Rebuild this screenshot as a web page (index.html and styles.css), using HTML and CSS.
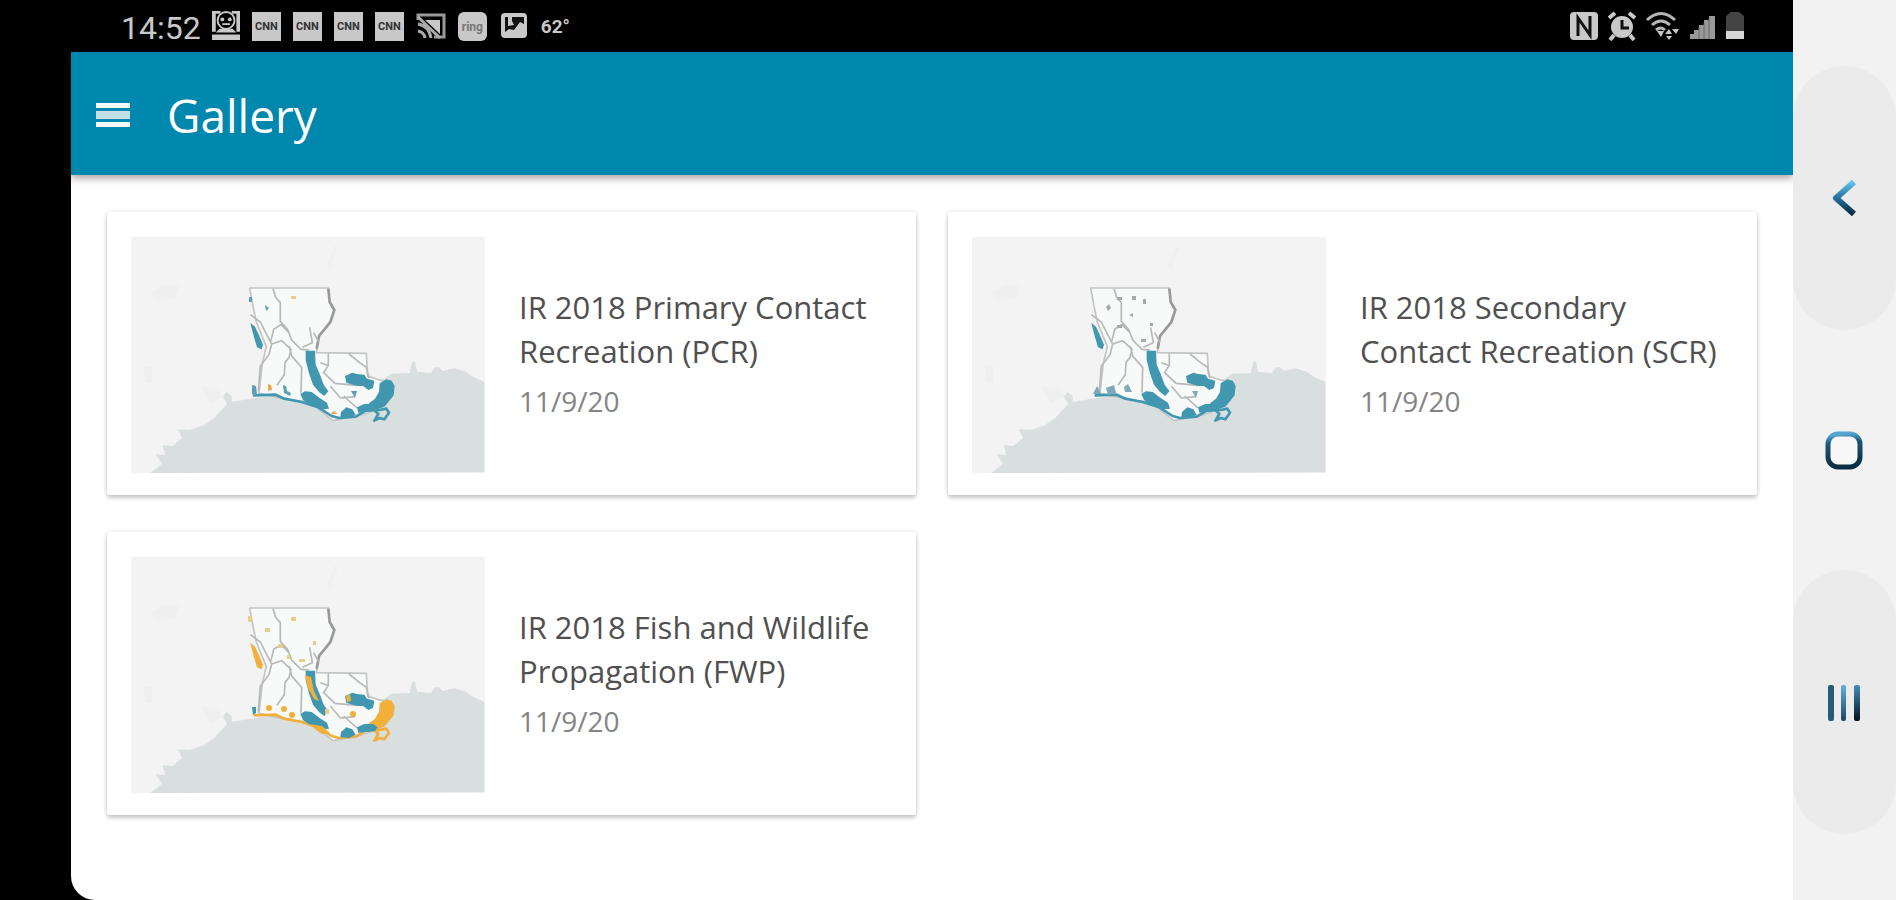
FILE: index.html
```
<!DOCTYPE html>
<html lang="en">
<head>
  <meta charset="UTF-8">
  <meta name="viewport" content="width=device-width, initial-scale=1.0">
  <title>Gallery</title>
  <link rel="stylesheet" href="styles.css">
</head>
<body>
  <!-- shared map shapes -->
  <svg class="defs" aria-hidden="true">
    <defs>
      <symbol id="base" viewBox="92 113 1062 708">
        <rect x="92" y="113" width="1062" height="708" fill="#f3f3f3"/>
        <path fill="#efefef" d="M150 280l40-25 45 5-10 35-50 8zM300 560l50 10 20 20-40 20zM680 200l20-60 12 5-20 60zM130 500h25v50h-20z"/>
        <path fill="#d9dedf" d="M150 821l35-28-20-30 30 5-8-30 30 2 28-24-12-26 35 2 42-14 32-22 38-42-12-22 10-14 16 12v18l58-10 400-60 20-15 56-2 8-34h8l6 30 42 4 10-16 12-2 14 12 34-8 34 10 22 16 34 14v272z"/>
        <path fill="#f8f9f9" stroke="#c4c4c4" stroke-width="5" stroke-linejoin="round" d="M448 266H684l4 42 14 24-12 36-34 42-8 50 150 2 4 68 36 12 38 12-2 36-40 40-60 20-76 14-70-56-60-6-92-20 10-90 12-50-30-74-10-48z"/>
        <path fill="none" stroke="#999" stroke-width="8" d="M684 268l4 40 14 24-12 36-34 42-7 38"/>
        <path fill="none" stroke="#b8b8b8" stroke-width="5" d="M518 268l8 26 14 16v56l22 24 12 32 28 28 24 2M450 346l30 22 16 32 18 34 30-10 28 26-6 24-12 16-2 36-22 32M514 434l-8 32-26 34-6 76M566 440l8 30 30 34-2 76M512 424l8-34 22-14 24 24M628 384l8 46-30 14M640 400l16 30M684 462v36l-14 22 34 32 66 6 36-14M746 464l32 26 20 14 8 32M660 490l22 8M690 560l30 36 44-4M730 590l40 36"/>
      </symbol>
      <symbol id="coast" viewBox="92 113 1062 708">
        <path d="M616 454h28l2 42 12 28 12 32 14 20-12 14-16-12-18-22-12-34-10-40z"/>
        <path d="M734 530l22-10 14 4 22 2 8 12 22 6-4 22-14 6-16-12-14 0-16-4-20-6z"/>
        <path d="M600 584l14-8 20 2 24 18 22 14 6 18-22 2-30-10-26-18zM722 638l16-14 18 6 10 16-20 10-26-2zM770 624l22-10 26 0 14 10-8 12-50 4z"/>
      </symbol>
      <symbol id="delta" viewBox="92 113 1062 708">
        <path d="M838 552l20-12 16 4 9 16-3 28-14 18-14 16-22 8-22-8-2-10 18-14 12-20z"/>
        <path fill="none" stroke-width="8" stroke="currentColor" stroke-linejoin="round" d="M822 632l12 12-12 20 16-8 14 4 14-20-8-12-20 4z"/>
      </symbol>
      <symbol id="shore" viewBox="92 113 1062 708">
        <path d="M450 370l14 12 12 26 12 28-4 14-14-6-10-34z"/>
        <path fill="none" stroke-width="8" stroke="currentColor" stroke-linejoin="round" d="M460 588l66-2 26 12 52 10 50 16 40 26 22 6 50-4 30-18 26-4"/>
      </symbol>
    </defs>
  </svg>

  <div class="screen">
    <div class="statusbar">
      <span class="clock">14:52</span>
      <div class="notifications">
        <svg viewBox="0 0 30 32" class="icon"><path fill="#c8c8c8" d="M0 0h9v3H4v19H0zM21 0h9v22h-4V3h-5zM0 25h30v6H0zM8 19h14l4 4H4z"/><circle cx="15" cy="10" r="9" fill="none" stroke="#c8c8c8" stroke-width="2"/><circle cx="11" cy="9" r="2" fill="#c8c8c8"/><circle cx="19" cy="9" r="2" fill="#c8c8c8"/><path stroke="#c8c8c8" stroke-width="2" d="M11 14h8"/></svg>
        <span class="app">CNN</span>
        <span class="app">CNN</span>
        <span class="app">CNN</span>
        <span class="app">CNN</span>
        <svg viewBox="0 0 30 30" class="icon"><path fill="none" stroke="#999" stroke-width="3" d="M2 9V4h26v22H18"/><path fill="#c8c8c8" d="M9 9h15v14z"/><path fill="none" stroke="#aaa" stroke-width="3" d="M2 13q11 2 13 14M2 20q6 1 7 7M2 6l22 21"/></svg>
        <span class="app app-ring">ring</span>
        <svg viewBox="0 0 30 30" class="icon"><rect x="2" y="2" width="26" height="25" rx="4" fill="#c8c8c8"/><path fill="#111" d="M6 6h3v9l6-1-2-4V6h12v7l-4-2-6 8-5-1-4 3H6z"/></svg>
        <span class="temp">62°</span>
      </div>
      <div class="system">
        <svg viewBox="0 0 30 30" class="icon"><rect x="1" y="1" width="28" height="28" rx="4" fill="#c8c8c8"/><path fill="none" stroke="#111" stroke-width="3" d="M9 25V7l12 17V5"/></svg>
        <svg viewBox="0 0 30 30" class="icon"><circle cx="15" cy="16" r="11" fill="#c8c8c8"/><path stroke="#c8c8c8" stroke-width="4" d="M2 7l6-5M28 7l-6-5M7 24l-4 5M23 24l4 5"/><path fill="none" stroke="#111" stroke-width="3" d="M15 9v8h7"/></svg>
        <svg viewBox="0 0 36 30" class="icon"><g fill="none" stroke="#b5b5b5" stroke-width="3"><path d="M2 9q14-13 28 0M7 14q9-8 18 0M11 19q5-4 9 0"/></g><path fill="#c8c8c8" d="M12 20h7l-3 6zM20 23l4-5 3 5zM27 18h7l-3 5zM21 25h6l-3 4z"/></svg>
        <svg viewBox="0 0 28 30" class="icon"><path fill="#999" d="M1 28v-5h4v-4h5v-5h5V9h5V5h6v23z"/><path stroke="#666" stroke-width="1" d="M10 16v12M15 12v16M20 7v21"/></svg>
        <svg viewBox="0 0 20 30" class="icon"><path fill="#444" d="M1 5l5-4h8l5 4v15H1z"/><path fill="#d6d6d6" d="M1 20h18v8H1z"/></svg>
      </div>
    </div>

    <main class="app-view">
      <header class="toolbar">
        <button class="menu" type="button" aria-label="Menu">
          <span></span><span></span><span></span>
        </button>
        <h1>Gallery</h1>
      </header>

      <section class="cards">
        <a class="card" href="#pcr">
          <svg class="map" viewBox="0 0 354 236">
            <use href="#base"/>
            <g class="blue"><use href="#coast"/><use href="#delta"/><use href="#shore"/></g>
            <g fill="#5d9fb6"><path d="M121 148l4 1 1 9-4 2-1-5zM152 148l3 1 1 5 4 2-1 3-6-3zM134 68l4 3-3 3zM118 60h3v5h-3zM220 154h6l-2 7z"/></g>
            <g fill="#e6a94e"><path d="M137 147l3 1 1 5-4 1zM202 174l5 3h-7z"/></g>
            <path fill="#e9cd8a" d="M160 59h5v3h-5z"/>
          </svg>
          <div class="info">
            <h2>IR 2018 Primary Contact Recreation (PCR)</h2>
            <time datetime="2020-11-09">11/9/20</time>
          </div>
        </a>

        <a class="card" href="#scr">
          <svg class="map" viewBox="0 0 354 236">
            <use href="#base"/>
            <g class="blue"><use href="#coast"/><use href="#delta"/><use href="#shore"/></g>
            <g fill="#7fa9b8"><path d="M121 157l4-8 4 8zM134 151l8-3 2 8-8 2zM152 150l4-3 4 8h-7zM220 154h6l-2 7z"/></g>
            <g fill="#a3aaae"><path d="M134 70l3-3 2 4-3 3zM145 60h5v3h-5zM160 59h4v4h-4zM157 78l4-2v4zM145 88h5v3h-5zM171 62h3v5h-3zM178 86h3v3h-3zM169 102h5v3h-5z"/></g>
          </svg>
          <div class="info">
            <h2>IR 2018 Secondary Contact Recreation (SCR)</h2>
            <time datetime="2020-11-09">11/9/20</time>
          </div>
        </a>

        <a class="card" href="#fwp">
          <svg class="map" viewBox="0 0 354 236">
            <use href="#base"/>
            <g class="orange"><use href="#shore"/><use href="#delta"/></g>
            <g class="blue"><use href="#coast"/></g>
            <g fill="#f2b03b"><path d="M174 118l6 2 3 14 5 10-5-2-6-11zM215 139l4-2 1 7-4 1zM177 167l14 2 8 7-8 1z"/><circle cx="138" cy="151" r="3"/><circle cx="153" cy="152" r="3"/><circle cx="161" cy="158" r="3"/><circle cx="222" cy="157" r="3"/></g>
            <g fill="#e9cd8a"><path d="M117 59h4v6h-4zM134 71h5v4h-5zM160 60h5v4h-5zM147 87h5v4h-5zM156 98h3v4h-3zM168 102h6v3h-6zM182 84h3v4h-3zM194 152h4v5h-4z"/></g>
            <path fill="#4197b0" d="M121 150l4 0 0 6-3 2z"/>
          </svg>
          <div class="info">
            <h2>IR 2018 Fish and Wildlife Propagation (FWP)</h2>
            <time datetime="2020-11-09">11/9/20</time>
          </div>
        </a>
      </section>
    </main>
  </div>

  <nav class="navbar">
    <button type="button" class="pill" aria-label="Back">
      <svg viewBox="0 0 40 40">
        <defs>
          <linearGradient id="g1" x1="0" y1="0" x2="0" y2="1"><stop offset="0" stop-color="#5ec4ee"/><stop offset=".5" stop-color="#24709c"/><stop offset="1" stop-color="#062a42"/></linearGradient>
        </defs>
        <path fill="none" stroke="url(#g1)" stroke-width="6" stroke-linejoin="round" d="M29 4L11 20l18 16"/>
      </svg>
    </button>
    <button type="button" aria-label="Home">
      <svg viewBox="0 0 40 40">
        <defs>
          <linearGradient id="g2" x1=".6" y1="0" x2=".7" y2="1"><stop offset="0" stop-color="#55a5cf"/><stop offset=".25" stop-color="#1f5372"/><stop offset="1" stop-color="#092c42"/></linearGradient>
        </defs>
        <rect x="3" y="4" width="32" height="33" rx="10" fill="#f7f7f7" stroke="url(#g2)" stroke-width="5"/>
      </svg>
    </button>
    <button type="button" class="pill" aria-label="Recent apps">
      <svg viewBox="0 0 40 40">
        <defs>
          <linearGradient id="g3" x1="0" y1="0" x2="0" y2="1"><stop offset="0" stop-color="#5fb2e2"/><stop offset="1" stop-color="#1d4460"/></linearGradient>
          <linearGradient id="g4" x1="0" y1="0" x2="0" y2="1"><stop offset="0" stop-color="#4390ba"/><stop offset="1" stop-color="#02111d"/></linearGradient>
        </defs>
        <rect x="3" y="3" width="6" height="36" rx="2" fill="#275c77"/>
        <rect x="16" y="3" width="5" height="36" rx="2" fill="url(#g3)"/>
        <rect x="29" y="3" width="6" height="36" rx="2" fill="url(#g4)"/>
      </svg>
    </button>
  </nav>
</body>
</html>
```
FILE: styles.css
```
* {
  box-sizing: border-box;
}
body {
  margin: 0;
  min-height: 100vh;
  background: #000;
  font-family: 'Open Sans', sans-serif;
  display: flex;
}
button {
  border: 0;
  padding: 0;
  background: none;
  cursor: pointer;
}
h1, h2 {
  margin: 0;
  font-weight: 400;
}
.defs {
  position: absolute;
  width: 0;
  height: 0;
}
.screen {
  flex: 1;
  min-width: 0;
  padding-left: 71px;
  display: flex;
  flex-direction: column;
}

/* status bar */
.statusbar {
  height: 52px;
  padding: 0 48px 0 50px;
  display: flex;
  align-items: center;
  color: #c8c8c8;
  font-family: Roboto, sans-serif;
}
.clock {
  font-size: 32px;
  line-height: 40px;
  padding-top: 4px;
}
.notifications {
  margin-left: 11px;
  display: flex;
  align-items: center;
  gap: 12px;
}
.icon {
  height: 30px;
  display: block;
}
.app {
  width: 29px;
  height: 29px;
  background: #c8c8c8;
  color: #333;
  font-size: 11px;
  font-weight: 700;
  line-height: 30px;
  text-align: center;
}
.app-ring {
  border-radius: 6px;
  color: #777;
  font-size: 12px;
}
.temp {
  font-size: 19px;
  font-weight: 700;
}
.system {
  margin-left: auto;
  display: flex;
  align-items: center;
  gap: 8px;
}

/* app */
.app-view {
  flex: 1;
  background: #fff;
  border-bottom-left-radius: 24px;
}
.toolbar {
  height: 123px;
  padding: 2px 25px 0;
  display: flex;
  align-items: center;
  gap: 37px;
  background: #0087ae;
  color: #fff;
  box-shadow: 0 3px 8px rgba(60, 40, 40, 0.45);
}
.toolbar h1 {
  font-size: 46px;
  line-height: 60px;
}
.menu {
  width: 34px;
  display: flex;
  flex-direction: column;
  gap: 3px;
}
.menu span {
  height: 5px;
  background: #f2fafc;
}
.menu span:nth-child(2) {
  height: 8px;
  background: #c3dfe9;
}
.cards {
  padding: 37px 36px 36px;
  display: grid;
  grid-template-columns: 1fr 1fr;
  gap: 37px 32px;
}
.card {
  padding: 25px 24px 22px;
  display: flex;
  align-items: center;
  gap: 34px;
  background: #fff;
  border-radius: 3px;
  box-shadow: 0 3px 4px rgba(0, 0, 0, 0.2), 0 0 5px rgba(0, 0, 0, 0.1);
  color: #505050;
  text-decoration: none;
}
.map {
  flex: none;
  width: 354px;
  height: 236px;
}
.blue {
  fill: #4197b0;
  color: #4197b0;
}
.orange {
  fill: #f2b03b;
  color: #f2b03b;
}
.info h2 {
  font-size: 31px;
  line-height: 44px;
}
.info time {
  display: block;
  margin: 8px 0 4px;
  color: #848484;
  font-size: 28px;
  line-height: 40px;
}

/* phone buttons */
.navbar {
  width: 103px;
  background: #f2f2f2;
  display: flex;
  flex-direction: column;
  justify-content: center;
}
.navbar button {
  height: 264px;
  border-radius: 52px;
  display: flex;
  align-items: center;
  justify-content: center;
}
.navbar button + button {
  margin-top: -12px;
}
.navbar .pill {
  background: #ebebeb;
}
.navbar svg {
  width: 40px;
  height: 40px;
}
```
